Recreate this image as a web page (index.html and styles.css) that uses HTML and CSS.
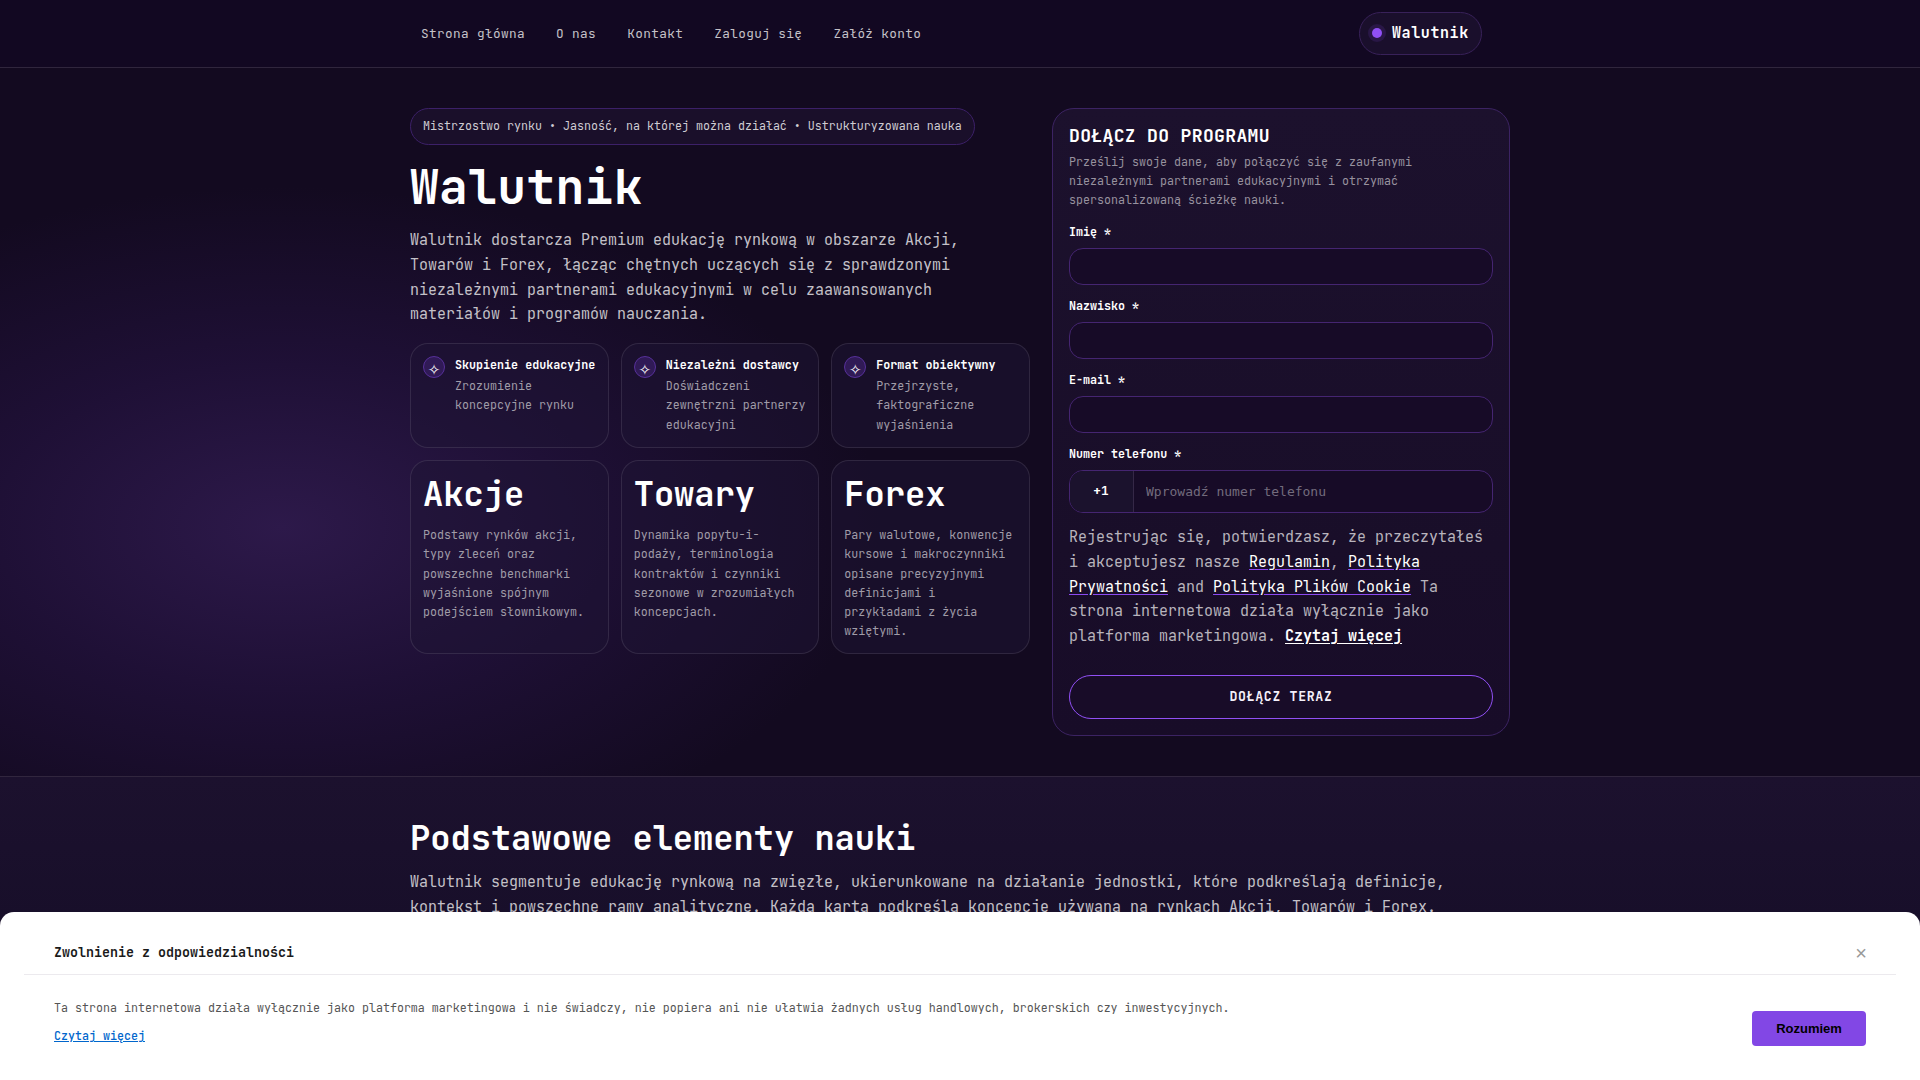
FILE: index.html
```html
<!DOCTYPE html>
<html lang="pl">
<head>
  <meta charset="UTF-8">
  <meta name="viewport" content="width=device-width, initial-scale=1.0">
  <title>Walutnik</title>
  <link rel="stylesheet" href="styles.css">
</head>
<body>
  <header class="site-header">
    <div class="header-inner">
      <nav class="main-nav">
        <a href="#">Strona główna</a>
        <a href="#">O nas</a>
        <a href="#">Kontakt</a>
        <a href="#">Zaloguj się</a>
        <a href="#">Załóż konto</a>
      </nav>
      <a class="brand" href="#"><span class="brand-dot"></span>Walutnik</a>
    </div>
  </header>

  <section class="hero">
    <div class="container hero-grid">
      <div class="hero-copy">
        <div class="eyebrow">Mistrzostwo rynku • Jasność, na której można działać • Ustrukturyzowana nauka</div>
        <h1>Walutnik</h1>
        <p class="lead">Walutnik dostarcza Premium edukację rynkową w obszarze Akcji, Towarów i Forex, łącząc chętnych uczących się z sprawdzonymi niezależnymi partnerami edukacyjnymi w celu zaawansowanych materiałów i programów nauczania.</p>

        <div class="cards features">
          <div class="card feature">
            <span class="icon">✧</span>
            <div>
              <strong>Skupienie edukacyjne</strong>
              <p>Zrozumienie koncepcyjne rynku</p>
            </div>
          </div>
          <div class="card feature">
            <span class="icon">✧</span>
            <div>
              <strong>Niezależni dostawcy</strong>
              <p>Doświadczeni zewnętrzni partnerzy edukacyjni</p>
            </div>
          </div>
          <div class="card feature">
            <span class="icon">✧</span>
            <div>
              <strong>Format obiektywny</strong>
              <p>Przejrzyste, faktograficzne wyjaśnienia</p>
            </div>
          </div>
        </div>

        <div class="cards markets">
          <div class="card market">
            <h2>Akcje</h2>
            <p>Podstawy rynków akcji, typy zleceń oraz powszechne benchmarki wyjaśnione spójnym podejściem słownikowym.</p>
          </div>
          <div class="card market">
            <h2>Towary</h2>
            <p>Dynamika popytu-i-podaży, terminologia kontraktów i czynniki sezonowe w zrozumiałych koncepcjach.</p>
          </div>
          <div class="card market">
            <h2>Forex</h2>
            <p>Pary walutowe, konwencje kursowe i makroczynniki opisane precyzyjnymi definicjami i przykładami z życia wziętymi.</p>
          </div>
        </div>
      </div>

      <form class="signup">
        <h3>DOŁĄCZ DO PROGRAMU</h3>
        <p class="signup-note">Prześlij swoje dane, aby połączyć się z zaufanymi niezależnymi partnerami edukacyjnymi i otrzymać spersonalizowaną ścieżkę nauki.</p>
        <div class="field">
          <label for="first-name">Imię *</label>
          <input id="first-name" type="text">
        </div>
        <div class="field">
          <label for="last-name">Nazwisko *</label>
          <input id="last-name" type="text">
        </div>
        <div class="field">
          <label for="email">E-mail *</label>
          <input id="email" type="email">
        </div>
        <div class="field">
          <label for="phone">Numer telefonu *</label>
          <div class="phone">
            <span class="phone-code">+1</span>
            <input id="phone" type="tel" placeholder="Wprowadź numer telefonu">
          </div>
        </div>
        <p class="consent">Rejestrując się, potwierdzasz, że przeczytałeś i akceptujesz nasze <a href="#">Regulamin</a>, <a href="#">Polityka Prywatności</a> and <a href="#">Polityka Plików Cookie</a> Ta strona internetowa działa wyłącznie jako platforma marketingowa. <a class="more" href="#">Czytaj więcej</a></p>
        <button class="join" type="button">DOŁĄCZ TERAZ</button>
      </form>
    </div>
  </section>

  <section class="basics">
    <div class="container">
      <h2>Podstawowe elementy nauki</h2>
      <p class="basics-text">Walutnik segmentuje edukację rynkową na zwięzłe, ukierunkowane na działanie jednostki, które podkreślają definicje, kontekst i powszechne ramy analityczne. Każda karta podkreśla koncepcję używaną na rynkach Akcji, Towarów i Forex.</p>
    </div>
  </section>

  <!-- Disclaimer bar -->
  <div class="disclaimer">
    <div class="disclaimer-head">
      <span>Zwolnienie z odpowiedzialności</span>
      <button class="close" type="button">×</button>
    </div>
    <div class="disclaimer-body">
      <div>
        <p>Ta strona internetowa działa wyłącznie jako platforma marketingowa i nie świadczy, nie popiera ani nie ułatwia żadnych usług handlowych, brokerskich czy inwestycyjnych.</p>
        <a href="#">Czytaj więcej</a>
      </div>
      <button class="accept" type="button">Rozumiem</button>
    </div>
  </div>
</body>
</html>
```

FILE: styles.css
```css
* {
  box-sizing: border-box;
}
html {
  font-size: 15px;
  background: #130a20;
}
body {
  margin: 0;
  height: 1080px;
  overflow: hidden;
  font-family: "JetBrains Mono", "DejaVu Sans Mono", monospace;
  font-size: 15px;
  line-height: 1.65;
  color: #fff;
  background: radial-gradient(600px 340px at 282px 527px, #2d194a, rgba(35, 18, 62, 0.7) 50%, rgba(24, 12, 46, 0)), #130a20;
}
h1, h2, h3, p {
  margin: 0;
}
h2 {
  font-size: 33.75px;
  line-height: 40px;
  letter-spacing: -0.03px;
}
.container {
  width: 1100px;
  margin: 0 auto;
}

/* header */
.site-header {
  height: 68px;
  background: #120822;
  border-bottom: 1px solid #30263d;
}
.header-inner {
  width: 1100px;
  height: 67px;
  margin: 0 auto;
  padding: 0 28px 0 11px;
  display: flex;
  justify-content: space-between;
  align-items: center;
}
.main-nav {
  display: flex;
  gap: 31.2px;
}
.main-nav a {
  color: #c4c1c8;
  font-size: 12.75px;
  letter-spacing: 0.34px;
  text-decoration: none;
}
.brand {
  display: flex;
  align-items: center;
  gap: 10px;
  width: 123px;
  height: 43px;
  padding: 0 0 1px 12px;
  border: 1px solid #382159;
  border-radius: 22px;
  background: #1a0f2c;
  color: #fff;
  font-weight: bold;
  letter-spacing: 0.6px;
  text-decoration: none;
}
.brand-dot {
  width: 10px;
  height: 10px;
  border-radius: 50%;
  background: #9150f5;
  box-shadow: 0 0 0 4px #291746;
}

/* hero */
.hero {
  height: 708px;
  padding-top: 40px;
}
.hero-grid {
  display: grid;
  grid-template-columns: 620px 458px;
  gap: 22px;
  align-items: start;
}
.eyebrow {
  width: 565px;
  height: 37px;
  padding-left: 12px;
  border: 1px solid #3c2068;
  border-radius: 19px;
  background: #1a0f2a;
  color: #cfccd3;
  font-size: 11.7px;
  letter-spacing: -0.015px;
  line-height: 34px;
  white-space: nowrap;
}
h1 {
  margin-top: 16px;
  font-size: 48px;
  line-height: 52px;
  letter-spacing: 0.3px;
}
.lead {
  width: 580px;
  margin-top: 15px;
  color: #c4c1c8;
}
.cards {
  display: grid;
  grid-template-columns: repeat(3, 1fr);
  gap: 12px;
}
.card {
  padding: 12px;
  border: 1px solid rgba(255, 255, 255, 0.1);
  border-radius: 18px;
  background: rgba(30, 20, 52, 0.5);
}
.card p {
  color: #a09ca8;
  font-size: 11.7px;
  letter-spacing: -0.015px;
  line-height: 19.3px;
}
.features {
  margin-top: 16px;
}
.feature {
  display: flex;
  gap: 10px;
  height: 105px;
  padding-right: 5px;
}
.feature strong {
  display: block;
  font-size: 11.7px;
  line-height: 19px;
  margin-bottom: 2px;
}
.icon {
  display: flex;
  justify-content: center;
  flex: none;
  width: 22px;
  height: 22px;
  border: 1px solid #57309a;
  border-radius: 50%;
  background: #301a56;
  font-size: 20px;
  line-height: 22px;
}
.markets {
  margin-top: 12px;
}
.market {
  height: 194px;
  padding-top: 13px;
}
.market p {
  margin-top: 12px;
}

/* form */
.signup {
  height: 628px;
  padding: 16px;
  border: 1px solid #3c2363;
  border-radius: 22px;
  background: linear-gradient(#1c112d, #190e29 70%, #180c28);
}
.signup h3 {
  font-size: 18px;
  line-height: 21px;
  letter-spacing: 0.36px;
}
.signup-note {
  width: 370px;
  height: 58px;
  margin-top: 7px;
  color: #98929f;
  font-size: 11.7px;
  letter-spacing: -0.015px;
  line-height: 19.2px;
}
.field {
  margin-top: 12px;
}
.field label {
  display: block;
  margin-bottom: 6px;
  font-size: 11.7px;
  font-weight: bold;
  line-height: 19px;
}
.field input {
  display: block;
  width: 100%;
  height: 37px;
  border: 1px solid #452571;
  border-radius: 14px;
  background: #170b27;
  color: #fff;
  font-family: "DejaVu Sans Mono", monospace;
  font-size: 13px;
}
.phone {
  display: flex;
  height: 43px;
  border: 1px solid #452571;
  border-radius: 14px;
  background: #170b27;
  overflow: hidden;
}
.phone-code {
  width: 64px;
  padding-right: 1px;
  border-right: 1px solid #352847;
  background: #1b122d;
  font-size: 12.75px;
  font-weight: bold;
  line-height: 39px;
  text-align: center;
}
.phone input {
  flex: 1;
  height: 41px;
  padding: 0 12px;
  border: 0;
  border-radius: 0;
  background: none;
}
.phone input::placeholder {
  color: #736b7d;
}
.consent {
  margin-top: 12.2px;
  color: #b8b4bd;
}
.consent a {
  color: #fff;
  text-decoration-color: #8b4af0;
  text-underline-offset: 2px;
}
.consent .more {
  font-weight: bold;
  text-decoration-color: #fff;
}
.join {
  display: block;
  width: 100%;
  height: 44px;
  margin-top: 26px;
  border: 1px solid #9150f5;
  border-radius: 22px;
  background: #180c28;
  color: #f4f0fa;
  font-family: inherit;
  font-size: 13.2px;
  font-weight: bold;
  letter-spacing: 0.68px;
}

/* basics */
.basics {
  height: 304px;
  padding-top: 41px;
  border-top: 1px solid #31263e;
  background: linear-gradient(#1c112e, #180f2a 140px);
}
.basics-text {
  width: 1060px;
  margin-top: 12px;
  color: #c4c1c8;
}

/* disclaimer */
.disclaimer {
  position: fixed;
  left: 0;
  right: 0;
  bottom: 0;
  height: 168px;
  padding: 0 24px;
  border-radius: 14px 14px 0 0;
  background: #fff;
  color: #555;
}
.disclaimer-head {
  display: flex;
  justify-content: space-between;
  align-items: center;
  height: 63px;
  padding: 20px 29px 0 30px;
  border-bottom: 1px solid #eceaee;
  color: #1a1a1a;
  font-size: 13.33px;
  font-weight: 600;
}
.close {
  padding: 0;
  border: 0;
  background: none;
  color: #999;
  font-family: "Liberation Sans", sans-serif;
  font-size: 20px;
  line-height: 20px;
}
.disclaimer-body {
  display: flex;
  justify-content: space-between;
  padding: 24px 30px 0;
  font-size: 11.7px;
  letter-spacing: -0.015px;
}
.disclaimer-body a {
  display: block;
  margin-top: 9px;
  color: #0066cc;
  font-weight: 500;
}
.accept {
  width: 114px;
  height: 35px;
  margin-top: 12px;
  border: 0;
  border-radius: 4px;
  background: #8247e5;
  color: #000;
  font-family: "Liberation Sans", sans-serif;
  font-size: 13px;
  font-weight: bold;
}
```
